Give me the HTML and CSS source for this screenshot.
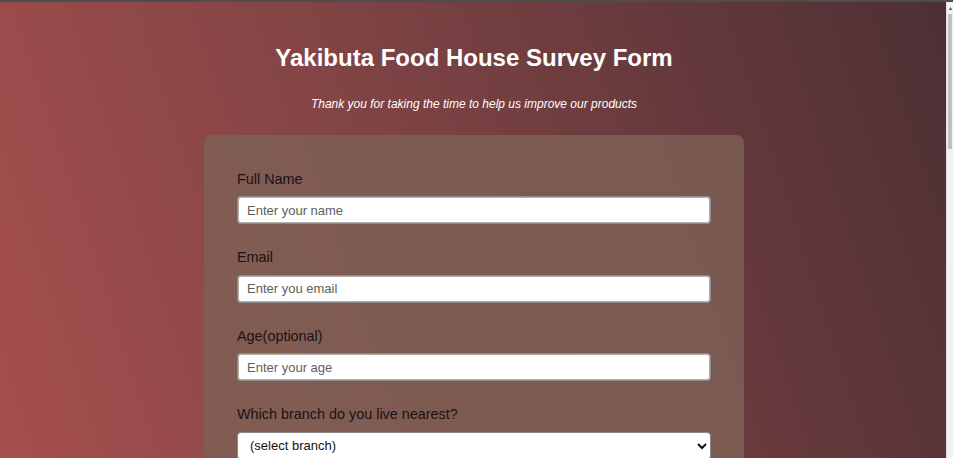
FILE: index.html
```html
<!DOCTYPE html>
<html lang="en">
<head>
<meta charset="utf-8">
<title>Yakibuta Food House Survey Form</title>
<link rel="stylesheet" href="styles.css">
</head>
<body>
<div class="topline"></div>
<div class="frame">
  <main class="page">
    <h1 class="title">Yakibuta Food House Survey Form</h1>
    <p class="subtitle">Thank you for taking the time to help us improve our products</p>
    <form class="card">
      <div class="group">
        <label class="label" for="name">Full Name</label>
        <input class="field" id="name" type="text" placeholder="Enter your name">
      </div>
      <div class="group">
        <label class="label" for="email">Email</label>
        <input class="field" id="email" type="email" placeholder="Enter you email">
      </div>
      <div class="group">
        <label class="label" for="age">Age(optional)</label>
        <input class="field" id="age" type="number" placeholder="Enter your age">
      </div>
      <div class="group">
        <label class="label" for="branch">Which branch do you live nearest?</label>
        <select class="field select" id="branch">
          <option>(select branch)</option>
        </select>
      </div>
    </form>
  </main>
  <div class="scrollbar">
    <div class="sb-arrow">&#9652;</div>
    <div class="sb-thumb"></div>
    <div class="sb-track"></div>
  </div>
</div>
</body>
</html>
```
FILE: styles.css
```css
html, body {
  margin: 0;
  padding: 0;
  height: 100%;
  overflow: hidden;
}
body {
  font-family: "Liberation Sans", Arial, sans-serif;
  display: flex;
  flex-direction: column;
}
.topline {
  height: 2px;
  background: #4d4d4d;
  flex: none;
}
.frame {
  flex: 1;
  display: flex;
  min-height: 0;
}
.page {
  flex: 1;
  background: linear-gradient(72deg, #a64f4e 0%, #7f4344 45%, #4d3034 100%);
  display: flex;
  flex-direction: column;
  align-items: center;
  overflow: hidden;
  padding-left: 2px;
}
.title {
  margin: 42px 0 0;
  font-size: 24px;
  font-weight: bold;
  color: #ffffff;
  line-height: 1.15;
}
.subtitle {
  margin: 25px 0 0;
  font-size: 12px;
  font-style: italic;
  color: #ffffff;
  line-height: 14px;
}
.card {
  margin-top: 24px;
  width: 540px;
  box-sizing: border-box;
  padding: 36px 33px 0;
  border-radius: 8px;
  background: rgba(125, 96, 85, 0.83);
  flex: none;
}
.group {
  display: flex;
  flex-direction: column;
  margin-bottom: 25px;
}
.label {
  font-size: 14.4px;
  color: #1a1212;
  line-height: 16.5px;
  margin-bottom: 9px;
}
.field {
  font-family: "Liberation Sans", Arial, sans-serif;
  font-size: 13px;
  height: 28px;
  box-sizing: border-box;
  padding: 0 9px;
  border: 1px solid #8a8a8a;
  border-radius: 4px;
  background: #ffffff;
  color: #222;
  box-shadow: inset 0 0 0 1px #b5b0ad;
}
.field::placeholder {
  color: #5e5e5e;
}
.select {
  padding: 0 8px;
  color: #111;
  box-shadow: none;
}
.scrollbar {
  width: 6px;
  flex: none;
  display: flex;
  flex-direction: column;
  background: #f1f1f1;
  border-left: 1px solid #e0e0e0;
}
.sb-arrow {
  height: 12px;
  font-size: 6px;
  line-height: 12px;
  color: #505050;
  text-align: center;
}
.sb-thumb {
  height: 135px;
  margin: 0 1px;
  background: #c1c1c1;
}
.sb-track {
  flex: 1;
}
```
